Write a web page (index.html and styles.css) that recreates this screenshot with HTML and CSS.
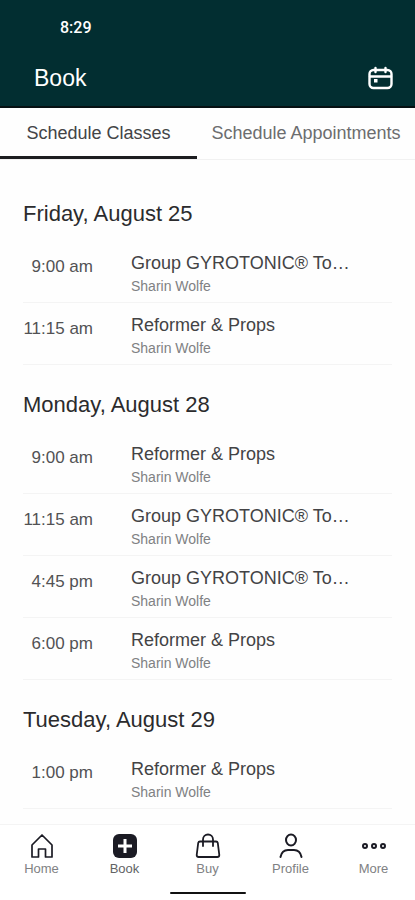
FILE: index.html
```html
<!DOCTYPE html>
<html lang="en">
<head>
    <meta charset="UTF-8">
    <meta name="viewport" content="width=device-width, initial-scale=1.0">
    <title>Book</title>
    <link rel="stylesheet" href="styles.css">
</head>
<body>
    <header class="app-header">
        <div class="status-bar">8:29</div>
        <div class="title-bar">
            <h1 class="page-title">Book</h1>
            <button class="calendar-button" type="button" aria-label="Calendar">
                <svg width="26" height="26" viewBox="0 0 26 26" fill="none" stroke="currentColor" stroke-width="2.4" stroke-linecap="round">
                    <rect x="2.5" y="5" width="22" height="18" rx="4"/>
                    <path d="M3 11.5h21M8.5 3v4M18.5 3v4"/>
                    <rect x="7.5" y="14.5" width="2.5" height="2.5" fill="currentColor" stroke-width="1"/>
                </svg>
            </button>
        </div>
    </header>

    <!-- Tabs -->
    <div class="tabs">
        <button class="tab tab-active" type="button">Schedule Classes</button>
        <button class="tab" type="button">Schedule Appointments</button>
    </div>

    <!-- Class list -->
    <main class="schedule">
        <section class="day">
            <h2 class="day-title">Friday, August 25</h2>
            <div class="class-row">
                <div class="class-time">9:00 am</div>
                <div class="class-info">
                    <div class="class-name">Group GYROTONIC® To…</div>
                    <div class="class-teacher">Sharin Wolfe</div>
                </div>
            </div>
            <div class="class-row">
                <div class="class-time">11:15 am</div>
                <div class="class-info">
                    <div class="class-name">Reformer &amp; Props</div>
                    <div class="class-teacher">Sharin Wolfe</div>
                </div>
            </div>
        </section>

        <section class="day">
            <h2 class="day-title">Monday, August 28</h2>
            <div class="class-row">
                <div class="class-time">9:00 am</div>
                <div class="class-info">
                    <div class="class-name">Reformer &amp; Props</div>
                    <div class="class-teacher">Sharin Wolfe</div>
                </div>
            </div>
            <div class="class-row">
                <div class="class-time">11:15 am</div>
                <div class="class-info">
                    <div class="class-name">Group GYROTONIC® To…</div>
                    <div class="class-teacher">Sharin Wolfe</div>
                </div>
            </div>
            <div class="class-row">
                <div class="class-time">4:45 pm</div>
                <div class="class-info">
                    <div class="class-name">Group GYROTONIC® To…</div>
                    <div class="class-teacher">Sharin Wolfe</div>
                </div>
            </div>
            <div class="class-row">
                <div class="class-time">6:00 pm</div>
                <div class="class-info">
                    <div class="class-name">Reformer &amp; Props</div>
                    <div class="class-teacher">Sharin Wolfe</div>
                </div>
            </div>
        </section>

        <section class="day">
            <h2 class="day-title">Tuesday, August 29</h2>
            <div class="class-row">
                <div class="class-time">1:00 pm</div>
                <div class="class-info">
                    <div class="class-name">Reformer &amp; Props</div>
                    <div class="class-teacher">Sharin Wolfe</div>
                </div>
            </div>
        </section>
    </main>

    <!-- Bottom navigation -->
    <nav class="bottom-nav">
        <div class="nav-items">
            <a class="nav-item" href="#home">
                <svg width="26" height="26" viewBox="0 0 26 26" fill="none" stroke="currentColor" stroke-width="1.7" stroke-linejoin="round">
                    <path d="M3 12L13 2l10 10v12h-6.500v-8h-7v8H3z"/>
                </svg>
                Home
            </a>
            <a class="nav-item nav-item-active" href="#book">
                <svg width="26" height="26" viewBox="0 0 26 26" fill="none" stroke="currentColor" stroke-width="3">
                    <rect x="1" y="1" width="24" height="24" rx="6" fill="currentColor" stroke="none"/>
                    <path d="M13 6v14M6 13h14" stroke="#fff"/>
                </svg>
                Book
            </a>
            <a class="nav-item" href="#buy">
                <svg width="26" height="26" viewBox="0 0 26 26" fill="none" stroke="currentColor" stroke-width="1.8" stroke-linecap="round" stroke-linejoin="round">
                    <path d="M5 8.500h16q1.500 0 1.800 1.500l1.500 12q0 2-2 2H3.700q-2 0-2-2l1.500-12q.3-1.500 1.800-1.500z"/>
                    <path d="M8 13V6.500a5 5 0 0 1 10 0V13"/>
                </svg>
                Buy
            </a>
            <a class="nav-item" href="#profile">
                <svg width="26" height="26" viewBox="0 0 26 26" fill="none" stroke="currentColor" stroke-width="2" stroke-linecap="round">
                    <ellipse cx="13" cy="7" rx="5" ry="5.500"/>
                    <path d="M2.500 24c1-5 4-7 7.500-7h6c3.500 0 6.500 2 7.500 7"/>
                </svg>
                Profile
            </a>
            <a class="nav-item" href="#more">
                <svg width="26" height="26" viewBox="0 0 26 26" fill="none" stroke="currentColor" stroke-width="2">
                    <circle cx="4" cy="13" r="2"/>
                    <circle cx="13" cy="13" r="2"/>
                    <circle cx="22" cy="13" r="2"/>
                </svg>
                More
            </a>
        </div>
        <div class="home-indicator"></div>
    </nav>
</body>
</html>
```
FILE: styles.css
```css
* {
    box-sizing: border-box;
}
body {
    margin: 0;
    height: 100vh;
    display: flex;
    flex-direction: column;
    overflow: hidden;
    background: #fefefe;
    color: #2b2b2d;
    font-family: "Liberation Sans", Arial, sans-serif;
}
button {
    border: none;
    padding: 0;
    background: none;
    font: inherit;
    color: inherit;
    cursor: pointer;
}

/* Header */
.app-header {
    flex: none;
    background: #022e31;
    color: #fff;
    border-bottom: 2px solid #061012;
}
.status-bar {
    padding: 18px 60px 0;
    font-family: Roboto, sans-serif;
    font-size: 16px;
    font-weight: 500;
    line-height: 20px;
}
.title-bar {
    display: flex;
    align-items: center;
    justify-content: space-between;
    padding: 26px 22px 14px 34px;
}
.page-title {
    margin: 0;
    font-size: 23px;
    font-weight: 400;
    line-height: 28px;
}
.calendar-button {
    height: 26px;
}
.calendar-button svg {
    display: block;
}

/* Tabs */
.tabs {
    flex: none;
    display: flex;
    border-bottom: 1px solid #f1f1f1;
}
.tab {
    flex: 1 1 auto;
    height: 51px;
    padding: 3px 12px 0;
    border-bottom: 3px solid transparent;
    color: #6c6d6f;
    font-size: 18px;
    white-space: nowrap;
}
.tab-active {
    padding: 3px 24px 0;
    border-bottom-color: #1c1d20;
    color: #434446;
}

/* Class list */
.schedule {
    flex: 1;
    min-height: 0;
    overflow: auto;
    padding: 14px 23px 0;
}
.day-title {
    margin: 0;
    padding: 26px 0 13px;
    font-size: 22px;
    font-weight: 400;
    line-height: 28px;
}
.class-row {
    display: flex;
    gap: 38px;
    padding: 12px 0 8px;
    border-bottom: 1px solid #f4f4f4;
}
.class-time {
    flex: none;
    display: flex;
    justify-content: flex-end;
    width: 70px;
    padding-top: 4px;
    color: #525254;
    font-size: 17px;
    line-height: 20px;
    white-space: nowrap;
}
.class-info {
    flex: 1;
    display: grid;
    gap: 5px;
}
.class-name {
    color: #434345;
    font-size: 18px;
    line-height: 20px;
}
.class-teacher {
    color: #808183;
    font-size: 14px;
    line-height: 16px;
}

/* Bottom navigation */
.bottom-nav {
    flex: none;
    border-top: 1px solid #f4f4f4;
    background: #fff;
    padding: 8px 0 6px;
}
.nav-items {
    display: flex;
}
.nav-item {
    flex: 1;
    display: flex;
    flex-direction: column;
    align-items: center;
    gap: 2px;
    color: #808183;
    font-size: 13px;
    line-height: 16px;
    text-decoration: none;
}
.nav-item svg {
    color: #1b1b24;
}
.nav-item-active {
    color: #626365;
}
.home-indicator {
    width: 76px;
    height: 2px;
    margin: 15px auto 0;
    border-radius: 1px;
    background: #111;
}
```
